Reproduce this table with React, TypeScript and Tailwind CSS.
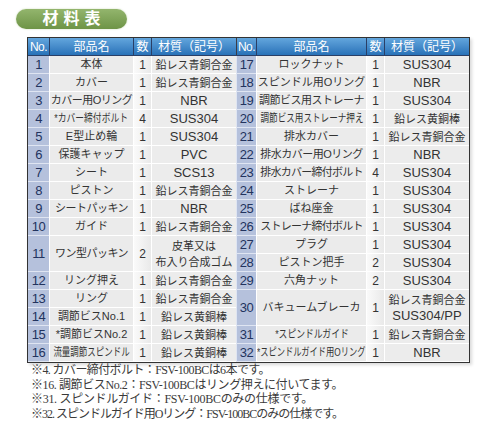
type Row = { no: number; name: string; qty: string; mat: string[]; tall?: boolean; fit?: string };

const left: Row[] = [
  { no: 1, name: "本体", qty: "1", mat: ["鉛レス青銅合金"] },
  { no: 2, name: "カバー", qty: "1", mat: ["鉛レス青銅合金"] },
  { no: 3, name: "カバー用Oリング", qty: "1", mat: ["NBR"], fit: "tracking-[-0.5px]" },
  { no: 4, name: "*カバー締付ボルト", qty: "4", mat: ["SUS304"], fit: "scale-x-[0.8]" },
  { no: 5, name: "E型止め輪", qty: "1", mat: ["SUS304"] },
  { no: 6, name: "保護キャップ", qty: "1", mat: ["PVC"] },
  { no: 7, name: "シート", qty: "1", mat: ["SCS13"] },
  { no: 8, name: "ピストン", qty: "1", mat: ["鉛レス青銅合金"] },
  { no: 9, name: "シートパッキン", qty: "1", mat: ["NBR"], fit: "tracking-[-0.5px]" },
  { no: 10, name: "ガイド", qty: "1", mat: ["鉛レス青銅合金"] },
  { no: 11, name: "ワン型パッキン", qty: "2", mat: ["皮革又は", "布入り合成ゴム"], tall: true, fit: "tracking-[-0.5px]" },
  { no: 12, name: "リング押え", qty: "1", mat: ["鉛レス青銅合金"] },
  { no: 13, name: "リング", qty: "1", mat: ["鉛レス青銅合金"] },
  { no: 14, name: "調節ビスNo.1", qty: "1", mat: ["鉛レス黄銅棒"] },
  { no: 15, name: "*調節ビスNo.2", qty: "1", mat: ["鉛レス黄銅棒"] },
  { no: 16, name: "流量調節スピンドル", qty: "1", mat: ["鉛レス黄銅棒"], fit: "scale-x-[0.77]" },
];

const right: Row[] = [
  { no: 17, name: "ロックナット", qty: "1", mat: ["SUS304"] },
  { no: 18, name: "スピンドル用Oリング", qty: "1", mat: ["NBR"] },
  { no: 19, name: "調節ビス用ストレーナ", qty: "1", mat: ["SUS304"], fit: "tracking-[-0.5px]" },
  { no: 20, name: "調節ビス用ストレーナ押え", qty: "1", mat: ["鉛レス黄銅棒"], fit: "scale-x-[0.78]" },
  { no: 21, name: "排水カバー", qty: "1", mat: ["鉛レス青銅合金"] },
  { no: 22, name: "排水カバー用Oリング", qty: "1", mat: ["NBR"], fit: "tracking-[-0.5px]" },
  { no: 23, name: "排水カバー締付ボルト", qty: "4", mat: ["SUS304"], fit: "tracking-[-0.75px]" },
  { no: 24, name: "ストレーナ", qty: "1", mat: ["SUS304"] },
  { no: 25, name: "ばね座金", qty: "1", mat: ["SUS304"] },
  { no: 26, name: "ストレーナ締付ボルト", qty: "1", mat: ["SUS304"], fit: "tracking-[-0.75px]" },
  { no: 27, name: "プラグ", qty: "1", mat: ["SUS304"] },
  { no: 28, name: "ピストン把手", qty: "2", mat: ["SUS304"] },
  { no: 29, name: "六角ナット", qty: "2", mat: ["SUS304"] },
  { no: 30, name: "バキュームブレーカ", qty: "1", mat: ["鉛レス青銅合金", "SUS304/PP"], tall: true },
  { no: 31, name: "*スピンドルガイド", qty: "1", mat: ["鉛レス青銅合金"], fit: "scale-x-[0.8]" },
  { no: 32, name: "*スピンドルガイド用Oリング", qty: "1", mat: ["NBR"], fit: "scale-x-[0.75]" },
];

const notes = [
  { t: "※4. カバー締付ボルト：FSV-100BCは6本です。", c: "tracking-[-0.6px]" },
  { t: "※16. 調節ビスNo.2：FSV-100BCはリング押えに付いてます。", c: "tracking-[-0.4px]" },
  { t: "※31. スピンドルガイド：FSV-100BCのみの仕様です。", c: "tracking-[-0.3px]" },
  { t: "※32. スピンドルガイド用Oリング：FSV-100BCのみの仕様です。", c: "tracking-[-1px]" },
];

const latin = (s: string) => /^[\x20-\x7e]+$/.test(s);

function Half({ rows, noW, nameW, first }: { rows: Row[]; noW: string; nameW: string; first?: boolean }) {
  const edge = first ? "" : "border-l border-[#3c3c44]";
  return (
    <div className="flex flex-col">
      {/* header */}
      <div className="flex h-[18px] bg-gradient-to-b from-[#63a6dd] to-[#2872b8] text-white text-[12px] border-b border-[#2a3f66]">
        <div className={`${noW} ${edge} flex items-center justify-center text-[12px] tracking-[-0.5px]`}>No.</div>
        <div className={`${nameW} border-l border-[#2a3f66] flex items-center justify-center`}>部品名</div>
        <div className="w-[18px] border-l border-[#2a3f66] flex items-center justify-center">数</div>
        <div className="w-[85px] border-l border-[#2a3f66] flex items-center justify-center">材質（記号）</div>
      </div>
      {rows.map((r) => (
        <div key={r.no} className={`flex ${r.tall ? "h-[36px]" : "h-[18px]"} text-[#333]`}>
          <div className={`${noW} ${edge} bg-[#b5c1dc] border-b border-[#dfe5f2] flex items-center justify-center text-[13px] text-[#22335e] tracking-[-0.5px]`}>
            {r.no}
          </div>
          <div className={`${nameW} border-l border-[#4a4a4a] bg-[#ebebeb] border-b border-white flex items-center justify-center text-[11px] whitespace-nowrap`}>
            <span className={`inline-block ${r.fit ?? ""}`}>{r.name}</span>
          </div>
          <div className="w-[18px] border-l border-[#4a4a4a] bg-gradient-to-r from-[#fafafa] to-[#e9e9e9] border-b border-white flex items-center justify-center text-[12px]">
            {r.qty}
          </div>
          <div className="w-[85px] border-l border-[#4a4a4a] bg-[#ececec] border-b border-white flex flex-col items-center justify-center leading-[16px] whitespace-nowrap">
            {r.mat.map((m) => (
              <span key={m} className={latin(m) ? "text-[13px]" : "text-[11px]"}>
                {m}
              </span>
            ))}
          </div>
        </div>
      ))}
    </div>
  );
}

export default function App() {
  return (
    <div className="w-[500px] h-[421px] bg-white overflow-hidden" style={{ fontFamily: '"Liberation Sans", "Noto Sans CJK JP", sans-serif' }}>
      {/* Title */}
      <div className="pt-[9px] pl-[16px]">
        <div className="w-[111px] h-[20px] rounded-full bg-gradient-to-b from-[#93b56d] to-[#6e9446] flex items-center justify-center shadow-[0_0_2px_#c8d9b4]">
          <span className="text-white font-bold text-[16px] tracking-[5px] pl-[5px] leading-none">材料表</span>
        </div>
      </div>

      {/* Table */}
      <div className="ml-[27px] mt-[8px] w-fit flex border border-[#333] shadow-[2px_2px_3px_rgba(0,0,0,0.15)]">
        <Half rows={left} noW="w-[21px]" nameW="w-[84px]" first />
        <Half rows={right} noW="w-[20px]" nameW="w-[110px]" />
      </div>

      {/* Notes */}
      <div className="ml-[31px] text-[12px] leading-[14.5px] text-[#3a3a3a] whitespace-nowrap" style={{ fontFamily: '"Liberation Serif", "Noto Sans CJK JP", serif' }}>
        {notes.map((n) => (
          <div key={n.t} className={n.c}>
            {n.t}
          </div>
        ))}
      </div>
    </div>
  );
}
